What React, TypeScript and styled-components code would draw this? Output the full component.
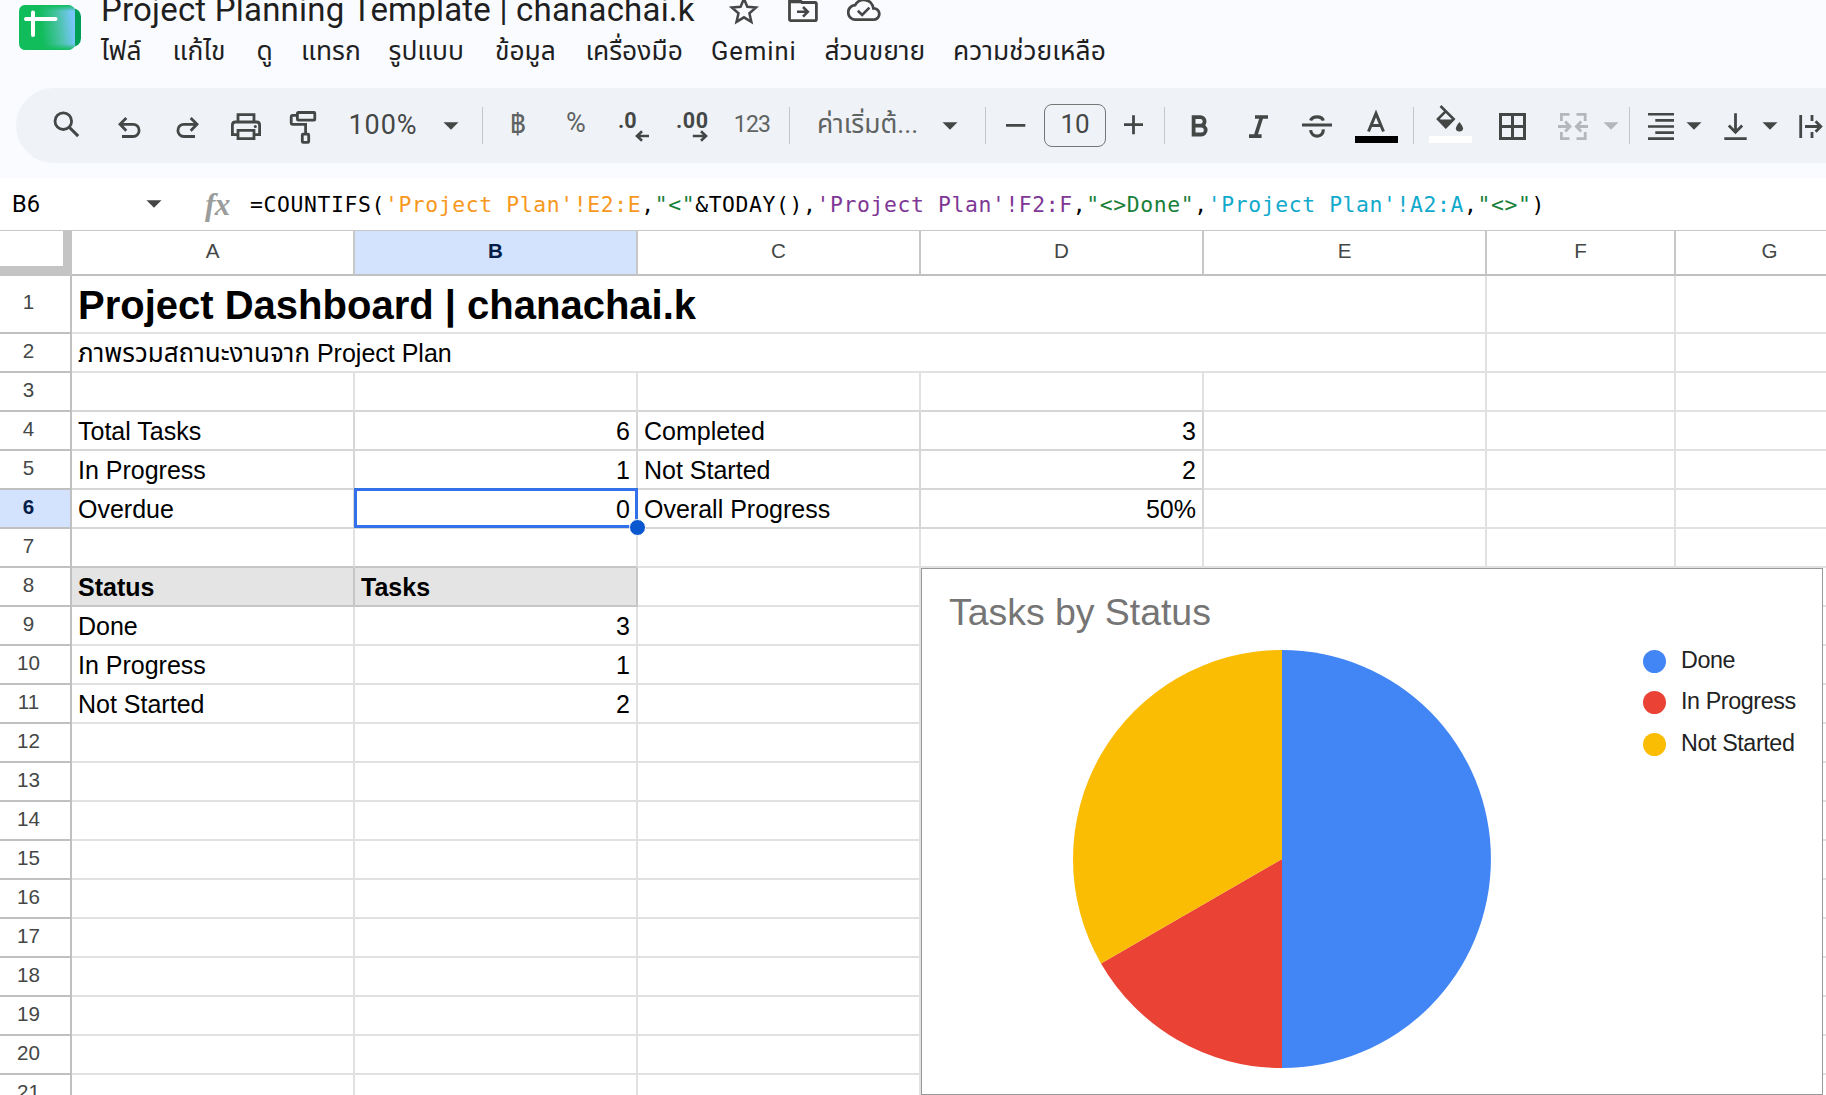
import React from "react";
import styled, { createGlobalStyle } from "styled-components";

const ICON = "#444746";
const GRID = "#e1e1e1";
const GRID_MID = "#d6d6d6";
const GRID_DARK = "#c6c6c6";

const sans = `"Liberation Sans", Arial, "Noto Sans Thai", sans-serif`;
const ui = `Roboto, "Noto Sans Thai", "Liberation Sans", sans-serif`;
const mono = `"DejaVu Sans Mono", "Liberation Mono", monospace`;

const GlobalStyle = createGlobalStyle`
  *, *::before, *::after { box-sizing: border-box; }
  html, body { margin: 0; padding: 0; overflow: hidden; background: #fff; }
  body { font-family: ${sans}; color: #000; }
`;

const Page = styled.div`
  display: flex;
  flex-direction: column;
  width: 1826px;
  height: 1095px;
  overflow: hidden;
  background: #fff;
`;

/* ---------- header ---------- */

const Top = styled.div`
  height: 178px;
  flex-shrink: 0;
  background: #f9fbff;
  overflow: hidden;
`;

const Header = styled.header`
  display: flex;
  height: 88px;
  padding-left: 19px;
`;

const Logo = styled.svg`
  width: 62px;
  height: 45px;
  margin-top: 5px;
  flex-shrink: 0;
`;

const HeaderText = styled.div`
  display: flex;
  flex-direction: column;
  margin-left: 20px;
`;

const TitleRow = styled.div`
  display: flex;
  align-items: center;
  height: 40px;
  margin-top: -10px;
`;

const Title = styled.h1`
  width: 594px;
  margin: 0;
  font: 400 33px/40px ${ui};
  letter-spacing: 0.2px;
  white-space: nowrap;
  color: #1f1f1f;
`;

const TitleIcon = styled.svg<{ $w: number; $gap: number }>`
  width: ${(p) => p.$w}px;
  height: 30px;
  margin-left: ${(p) => p.$gap}px;
  flex-shrink: 0;
`;

const Menu = styled.nav`
  display: flex;
  align-items: center;
  height: 43px;
  gap: 28.5px;
`;

const MenuItem = styled.span<{ $w: number; $track?: number }>`
  width: ${(p) => p.$w}px;
  flex-shrink: 0;
  font: 400 ${(p) => (p.$track ? 25.5 : 26.4)}px/43px ${ui};
  letter-spacing: ${(p) => p.$track ?? 0}px;
  white-space: nowrap;
  color: #1f1f1f;
`;

/* ---------- toolbar ---------- */

const Toolbar = styled.div`
  display: flex;
  align-items: center;
  height: 75px;
  margin-left: 16px;
  padding-left: 30px;
  border-radius: 37.5px 0 0 37.5px;
  background: #eff3f8;
  overflow: hidden;
`;

const Slot = styled.div<{ $w?: number; $gap?: number }>`
  display: flex;
  align-items: center;
  justify-content: center;
  width: ${(p) => p.$w ?? 40}px;
  height: 43px;
  margin-left: ${(p) => p.$gap ?? 0}px;
  flex-shrink: 0;
`;

const Divider = styled.div<{ $gap: number }>`
  width: 1px;
  height: 37px;
  margin-left: ${(p) => p.$gap}px;
  flex-shrink: 0;
  background: #c7c7c7;
`;

const Glyph = styled.svg<{ $muted?: boolean }>`
  display: block;
  width: 100%;
  height: 43px;
  overflow: visible;
  fill: none;
  stroke: ${(p) => (p.$muted ? "#b4b8ba" : ICON)};
  stroke-width: 2.8;
`;

const GlyphText = styled.text`
  font: 700 21.5px ${ui};
  fill: ${ICON};
  stroke: none;
`;

const Label = styled.span<{ $size: number; $weight?: number; $color?: string; $track?: number; $dy?: number }>`
  font: ${(p) => p.$weight ?? 400} ${(p) => p.$size}px/43px ${ui};
  letter-spacing: ${(p) => p.$track ?? 0}px;
  padding-bottom: ${(p) => p.$dy ?? 0}px;
  color: ${(p) => p.$color ?? ICON};
  white-space: nowrap;
`;

const SizeBox = styled.div`
  display: flex;
  align-items: center;
  justify-content: center;
  width: 62px;
  height: 43px;
  margin: 0 0 1px 8px;
  flex-shrink: 0;
  border: 1px solid #747775;
  border-radius: 8px;
`;

const CaretSvg = styled.svg<{ $gap: number }>`
  width: 16px;
  height: 8px;
  margin-left: ${(p) => p.$gap}px;
  flex-shrink: 0;
`;

const Caret = ({ gap, color = ICON }: { gap: number; color?: string }) => (
  <CaretSvg $gap={gap} viewBox="0 0 16 8">
    <path d="M0.5 0.3h15L8 7.8z" fill={color} />
  </CaretSvg>
);

/* ---------- formula bar ---------- */

const FormulaBar = styled.div`
  display: flex;
  align-items: center;
  height: 53px;
  padding-left: 12px;
  flex-shrink: 0;
  border-bottom: 1px solid #c7c7c7;
`;

const NameBox = styled.span`
  width: 134px;
  font: 400 23.5px/51px ${ui};
`;

const Fx = styled.span`
  width: 45px;
  margin-left: 43px;
  font: italic 700 31px/51px "Liberation Serif", serif;
  letter-spacing: -0.5px;
  color: #9a9d9b;
`;

const Formula = styled.span`
  padding-top: 1px;
  font: 400 21.4px/52px ${mono};
  letter-spacing: 0.61px;
  white-space: pre;
`;

const Token = styled.span<{ $color: string }>`
  color: ${(p) => p.$color};
`;

/* ---------- sheet ---------- */

const Sheet = styled.main`
  position: relative;
  flex: 1;
  overflow: hidden;
`;

const Row = styled.div<{ $h: number }>`
  display: flex;
  height: ${(p) => p.$h}px;
`;

const Corner = styled.div`
  width: 72px;
  flex-shrink: 0;
  border-right: 9px solid #c4c4c4;
  border-bottom: 10px solid #c4c4c4;
`;

const ColHead = styled.div<{ $w: number; $on: boolean }>`
  width: ${(p) => p.$w}px;
  flex-shrink: 0;
  border-right: 2px solid #c7c7c7;
  border-bottom: 2px solid #c0c0c0;
  background: ${(p) => (p.$on ? "#d3e3fd" : "#fff")};
  color: ${(p) => (p.$on ? "#041e49" : "#444746")};
  font: ${(p) => (p.$on ? 700 : 400)} 20.6px/40px ${sans};
  text-align: center;
`;

const RowHead = styled.div<{ $on: boolean }>`
  display: flex;
  align-items: center;
  justify-content: center;
  width: 72px;
  padding: 0 13px 4px 0;
  flex-shrink: 0;
  border-right: 2px solid #c0c0c0;
  border-bottom: 2px solid #c0c0c0;
  background: ${(p) => (p.$on ? "#d3e3fd" : "#fff")};
  color: ${(p) => (p.$on ? "#041e49" : "#444746")};
  font: ${(p) => (p.$on ? 700 : 400)} 20.6px/24px ${sans};
`;

const CellBox = styled.div<{
  $w: number; $fill?: string; $right: string; $bottom: string; $num?: boolean; $bold?: boolean; $size?: number;
}>`
  position: relative;
  display: flex;
  align-items: flex-end;
  justify-content: ${(p) => (p.$num ? "flex-end" : "flex-start")};
  width: ${(p) => p.$w}px;
  padding: 0 6px ${(p) => (p.$size ? 4 : 3)}px 6px;
  flex-shrink: 0;
  background: ${(p) => p.$fill ?? "#fff"};
  border-right: 2px solid ${(p) => p.$right};
  border-bottom: 2px solid ${(p) => p.$bottom};
  font-weight: ${(p) => (p.$bold ? 700 : 400)};
  font-size: ${(p) => p.$size ?? 25}px;
  line-height: ${(p) => (p.$size ? 45 : 29)}px;
  white-space: pre;
`;

const ThaiRun = styled.span`
  font-size: 26px;
`;

const Selection = styled.div`
  position: absolute;
  z-index: 2;
  left: -1px;
  top: -2px;
  width: 284px;
  height: 40px;
  border: 3px solid #3271ea;
`;

const Handle = styled.div`
  position: absolute;
  z-index: 3;
  left: 274px;
  top: 29px;
  width: 17px;
  height: 17px;
  border: 1px solid #fff;
  border-radius: 50%;
  background: #0b57d0;
`;

/* ---------- chart ---------- */

const ChartCard = styled.section`
  position: absolute;
  z-index: 4;
  left: 921px;
  top: 337px;
  width: 902px;
  height: 527px;
  padding: 21px 0 0 27px;
  border: 1px solid #999;
  background: #fff;
`;

const ChartTitle = styled.h2`
  margin: 0;
  font: 400 37.5px/44px ${sans};
  letter-spacing: -0.05px;
  color: #757575;
`;

const ChartBody = styled.div`
  display: flex;
  align-items: flex-start;
  padding: 16px 0 0 124px;
`;

const Pie = styled.svg`
  width: 418px;
  height: 418px;
  flex-shrink: 0;
`;

const Legend = styled.ul`
  display: flex;
  flex-direction: column;
  margin: -9px 0 0 152px;
  padding: 0;
  list-style: none;
`;

const LegendItem = styled.li`
  display: flex;
  align-items: center;
  gap: 15px;
  height: 41.3px;
  font: 400 23.3px/39px ${sans};
  letter-spacing: -0.4px;
  white-space: nowrap;
  color: #222;
`;

const LegendText = styled.span`
  padding-bottom: 2px;
`;

const Dot = styled.i<{ $color: string }>`
  width: 23px;
  height: 23px;
  border-radius: 50%;
  background: ${(p) => p.$color};
`;

/* ---------- data ---------- */

const MENU: { text: string; w: number; track?: number }[] = [
  { text: "ไฟล์", w: 43 },
  { text: "แก้ไข", w: 55.5 },
  { text: "ดู", w: 16 },
  { text: "แทรก", w: 59 },
  { text: "รูปแบบ", w: 78 },
  { text: "ข้อมูล", w: 62 },
  { text: "เครื่องมือ", w: 97 },
  { text: "Gemini", w: 85, track: 1 },
  { text: "ส่วนขยาย", w: 100 },
  { text: "ความช่วยเหลือ", w: 153 },
];

const COLS = [
  { name: "A", w: 283 },
  { name: "B", w: 283 },
  { name: "C", w: 283 },
  { name: "D", w: 283 },
  { name: "E", w: 283 },
  { name: "F", w: 189 },
  { name: "G", w: 189 },
];

const CELLS: Record<string, string> = {
  A4: "Total Tasks", B4: "6", C4: "Completed", D4: "3",
  A5: "In Progress", B5: "1", C5: "Not Started", D5: "2",
  A6: "Overdue", B6: "0", C6: "Overall Progress", D6: "50%",
  A8: "Status", B8: "Tasks",
  A9: "Done", B9: "3",
  A10: "In Progress", B10: "1",
  A11: "Not Started", B11: "2",
};

const FORMULA: [string, string][] = [
  ["=COUNTIFS(", "#000"],
  ["'Project Plan'!E2:E", "#f7981d"],
  [",", "#000"],
  ['"<"', "#188038"],
  ["&TODAY(),", "#000"],
  ["'Project Plan'!F2:F", "#7e3794"],
  [",", "#000"],
  ['"<>Done"', "#188038"],
  [",", "#000"],
  ["'Project Plan'!A2:A", "#11a9cc"],
  [",", "#000"],
  ['"<>"', "#188038"],
  [")", "#000"],
];

const SLICES = [
  { label: "Done", color: "#4285f4", value: 3 },
  { label: "In Progress", color: "#ea4335", value: 1 },
  { label: "Not Started", color: "#fbbc04", value: 2 },
];

function slicePaths() {
  const total = SLICES.reduce((n, s) => n + s.value, 0);
  let from = 0;
  return SLICES.map((s) => {
    const to = from + s.value / total;
    const at = (t: number) =>
      `${209 + 209 * Math.sin(t * 2 * Math.PI)} ${209 - 209 * Math.cos(t * 2 * Math.PI)}`;
    const d = `M209 209L${at(from)}A209 209 0 0 1 ${at(to)}Z`;
    from = to;
    return { d, color: s.color };
  });
}

function GridCell({ col, row, w }: { col: string; row: number; w: number }) {
  const key = `${col}${row}`;
  const text = CELLS[key];
  const left = "ABCD".includes(col);
  const head = row === 8 && (col === "A" || col === "B");
  const bottom =
    (row === 7 || row === 8) && "AB".includes(col) ? GRID_DARK : left && row >= 3 && row <= 6 ? GRID_MID : GRID;
  const right = head ? GRID_DARK : left && row >= 4 && row <= 6 ? GRID_MID : GRID;
  return (
    <CellBox
      $w={w}
      $fill={head ? "#e4e4e4" : undefined}
      $right={right}
      $bottom={bottom}
      $bold={head}
      $num={!!text && /^\d/.test(text)}
    >
      {text}
      {key === "B6" && (
        <>
          <Selection />
          <Handle />
        </>
      )}
    </CellBox>
  );
}

function SheetRow({ n }: { n: number }) {
  const merged = n <= 2;
  return (
    <Row $h={n === 1 ? 58 : 39}>
      <RowHead $on={n === 6}>{n}</RowHead>
      {merged && (
        <CellBox $w={1415} $right={GRID} $bottom={GRID} $bold={n === 1} $size={n === 1 ? 40 : undefined}>
          {n === 1 ? (
            "Project Dashboard | chanachai.k"
          ) : (
            <span>
              <ThaiRun>ภาพรวมสถานะงานจาก</ThaiRun> Project Plan
            </span>
          )}
        </CellBox>
      )}
      {COLS.slice(merged ? 5 : 0).map((c) => (
        <GridCell key={c.name} col={c.name} row={n} w={c.w} />
      ))}
    </Row>
  );
}

function AppHeader() {
  return (
    <Header>
      <Logo viewBox="0 0 62 45">
        <defs>
          <linearGradient id="sheetFill" x1="0" x2="1" y1="0.1" y2="0">
            <stop offset="0.35" stopColor="#11bc5b" />
            <stop offset="0.66" stopColor="#48c3a4" />
            <stop offset="0.93" stopColor="#78c6fb" />
          </linearGradient>
          <linearGradient id="sheetEdge" x1="0" x2="0" y1="0" y2="1">
            <stop offset="0" stopColor="#11bc5b" />
            <stop offset="0.14" stopColor="#11bc5b" stopOpacity="0" />
            <stop offset="0.86" stopColor="#11bc5b" stopOpacity="0" />
            <stop offset="1" stopColor="#11bc5b" />
          </linearGradient>
        </defs>
        <rect x="30" y="3.5" width="32" height="38" rx="8" fill="#009f57" />
        <path d="M7 0H49Q53 0 56 4V41Q53 45 49 45H7Q0 45 0 38V7Q0 0 7 0Z" fill="url(#sheetFill)" />
        <path d="M7 0H49Q53 0 56 4V41Q53 45 49 45H7Q0 45 0 38V7Q0 0 7 0Z" fill="url(#sheetEdge)" />
        <path d="M7 14H36.5M14 7.5V30" stroke="#fff" strokeWidth="4" strokeLinecap="round" />
      </Logo>
      <HeaderText>
        <TitleRow>
          <Title>Project Planning Template | chanachai.k</Title>
          <TitleIcon $w={30} $gap={34} viewBox="0 0 30 30" fill="none">
            <path
              d="M15 4.2L18.1 11.6L26 12.3L20 17.5L21.8 25.3L15 21.2L8.2 25.3L10 17.5L4 12.3L11.9 11.6Z"
              transform="translate(-1.4 -0.8) scale(1.09)"
              stroke={ICON}
              strokeWidth="2.3"
            />
          </TitleIcon>
          <TitleIcon $w={30} $gap={29} viewBox="0 0 30 30" fill="none">
            <path d="M1.5 8V5.8Q1.5 4.4 2.9 4.4H11L14 7.5H27Q28.4 7.5 28.4 9V24.2Q28.4 25.6 27 25.6H2.9Q1.5 25.6 1.5 24.2Z" stroke={ICON} strokeWidth="2.8" />
            <path d="M1.5 4H11.5L15 8.2H1.5Z" fill={ICON} />
            <path d="M9 16.8H19M15 12L19.8 16.8L15 21.6" stroke={ICON} strokeWidth="2.6" />
          </TitleIcon>
          <TitleIcon $w={34} $gap={29} viewBox="0 0 34 30" fill="none">
            <path
              d="M8.7 24.6a7.2 7.2 0 0 1-.6-14.4A9.7 9.7 0 0 1 26.4 13.4a5.6 5.6 0 0 1 .6 11.2Z"
              stroke={ICON}
              strokeWidth="2.8"
            />
            <path d="M10.8 15.8L15.2 20L22.4 12.6" stroke={ICON} strokeWidth="2.6" />
          </TitleIcon>
        </TitleRow>
        <Menu>
          {MENU.map((m) => (
            <MenuItem key={m.text} $w={m.w} $track={m.track}>{m.text}</MenuItem>
          ))}
        </Menu>
      </HeaderText>
    </Header>
  );
}

function ToolBar() {
  return (
    <Toolbar>
      <Slot><Glyph viewBox="0 0 40 43"><circle cx="17.3" cy="17.2" r="8.3" /><path d="M23 23L32.2 32.2" strokeWidth="3.1" /></Glyph></Slot>
      <Slot $gap={23}><Glyph viewBox="0 0 40 43"><path d="M11 20.3H24.2a5.9 6.1 0 0 1 0 12.2H13M17.3 13.9L11 20.3L17.3 26.7" /></Glyph></Slot>
      <Slot $gap={19}><Glyph viewBox="0 0 40 43"><path d="M29 20.3H15.8a5.9 6.1 0 0 0 0 12.2H27M22.7 13.9L29 20.3L22.7 26.7" /></Glyph></Slot>
      <Slot $gap={18}>
        <Glyph viewBox="0 0 40 43">
          <path d="M12 18V10.7H28V18M12 30.7H6.4V21Q6.4 18 9.4 18H30.6Q33.6 18 33.6 21V30.7H28M12 26.4H28V34.7H12Z" />
          <circle cx="29.3" cy="22.6" r="1.5" fill={ICON} stroke="none" />
        </Glyph>
      </Slot>
      <Slot $gap={17}>
        <Glyph viewBox="0 0 40 43">
          <rect x="14.4" y="8.5" width="17.4" height="7.6" rx="0.8" />
          <path d="M14.4 11.3H9.8Q8.2 11.3 8.2 12.9V18.7Q8.2 20.3 9.8 20.3H22.6V30" />
          <rect x="19.3" y="30.2" width="6.4" height="8.2" rx="0.8" />
        </Glyph>
      </Slot>
      <Slot $w={84} $gap={18}><Label $size={27} $track={0.9}>100%</Label></Slot>
      <Caret gap={18} />
      <Divider $gap={23} />
      <Slot $gap={15}><Label $size={28} $color="#5f6361" $dy={5}>฿</Label></Slot>
      <Slot $gap={18}><Label $size={27} $color="#5f6361" $dy={4}>%</Label></Slot>
      <Slot $gap={18}>
        <Glyph viewBox="0 0 40 43">
          <GlyphText x="4" y="24">.0</GlyphText>
          <path d="M35 32H23M28 27.2L23 32L28 36.8" strokeWidth="2.6" />
        </Glyph>
      </Slot>
      <Slot $gap={18}>
        <Glyph viewBox="0 0 40 43">
          <GlyphText x="4" y="24" textLength="32">.00</GlyphText>
          <path d="M20.8 32H33M29 27.2L34 32L29 36.8" strokeWidth="2.6" />
        </Glyph>
      </Slot>
      <Slot $gap={20}><Label $size={23} $color="#5f6361" $track={-0.8} $dy={3}>123</Label></Slot>
      <Divider $gap={17} />
      <Slot $w={99} $gap={28}><Label $size={26.4} $color="#5f6361" $dy={3}>ค่าเริ่มต้...</Label></Slot>
      <Caret gap={25} />
      <Divider $gap={27} />
      <Slot $gap={10}><Glyph viewBox="0 0 40 43"><path d="M10 21.3H29.3" /></Glyph></Slot>
      <SizeBox><Label $size={26} $dy={2}>10</Label></SizeBox>
      <Slot $gap={8}><Glyph viewBox="0 0 40 43"><path d="M10 20.7H29M19.5 11.2V30.2" /></Glyph></Slot>
      <Divider $gap={10} />
      <Slot $gap={15}><Glyph viewBox="0 0 40 43"><path d="M13.6 13.1H20.3a4.1 4.1 0 0 1 0 8.6H13.6ZM13.6 21.7H21.3a4.2 4.2 0 0 1 0 8.8H13.6Z" strokeWidth="3.8" /></Glyph></Slot>
      <Slot $gap={18}><Glyph viewBox="0 0 40 43"><path d="M17 13H30M11 32.2H23.6M23.6 13L17.4 32.2" strokeWidth="3.7" /></Glyph></Slot>
      <Slot $gap={19}>
        <Glyph viewBox="0 0 40 43">
          <path d="M5 21H35" strokeWidth="2.8" />
          <path d="M13.6 16.6C15.2 11.6 25 11.6 26.3 16.6M13.6 26.2C14.4 34.2 26.6 34.2 26.3 25.4" strokeWidth="3.2" />
        </Glyph>
      </Slot>
      <Slot $w={43} $gap={18}>
        <Glyph viewBox="0 0 43 43">
          <path d="M13.5 27.5L21 9.5L28.5 27.5M16 21.4H26" strokeWidth="3" />
          <rect y="32" width="43" height="7" fill="#000" stroke="none" />
        </Glyph>
      </Slot>
      <Divider $gap={15} />
      <Slot $w={43} $gap={15}>
        <Glyph viewBox="0 0 43 43">
          <path d="M11.5 2L24.6 15.1L16.8 22.6L9 15.1L16.6 7.4" strokeWidth="2.6" />
          <path d="M8 15.6H26L16.8 25Z" fill={ICON} stroke="none" />
          <path d="M30.4 18Q34 22.4 34 24.2a3.5 3.2 0 0 1-7.1 0Q26.9 22.4 30.4 18Z" fill={ICON} stroke="none" />
          <rect y="32" width="43" height="7" fill="#fff" stroke="none" />
        </Glyph>
      </Slot>
      <Slot $gap={21}><Glyph viewBox="0 0 40 43"><path d="M7.5 10.5H31.5V34.5H7.5ZM19.5 10.5V34.5M7.5 22.5H31.5" strokeWidth="3" /></Glyph></Slot>
      <Slot $gap={20}>
        <Glyph viewBox="0 0 40 43" $muted>
          <path d="M16.5 10.4H8.4V17M23.5 10.4H32.2V17M16.5 34.6H8.4V28M23.5 34.6H32.2V28M5 22.5H16.5M12.2 17.6L17 22.5L12.2 27.4M35 22.5H24M28.2 17.6L23.4 22.5L28.2 27.4" />
        </Glyph>
      </Slot>
      <Caret gap={10} color="#b4b8ba" />
      <Divider $gap={10} />
      <Slot $gap={11}><Glyph viewBox="0 0 40 43"><path d="M7 10.3H33M14.3 16.4H33M7 22.5H33M14.3 28.6H33M7 34.6H33" strokeWidth="2.6" /></Glyph></Slot>
      <Caret gap={5} />
      <Slot $gap={13}><Glyph viewBox="0 0 40 43"><path d="M9.3 34.6H31.7M20.5 9.3V28M13.8 21.6L20.5 28.2L27.2 21.6" /></Glyph></Slot>
      <Caret gap={7} />
      <Slot $gap={13}><Glyph viewBox="0 0 40 43"><path d="M9.7 11V34M21 11V17M21 28V34M14 22.5H29M24.6 17.2L29.8 22.5L24.6 27.8" /></Glyph></Slot>
    </Toolbar>
  );
}

export default function App() {
  const rows = Array.from({ length: 21 }, (_, i) => i + 1);
  return (
    <Page>
      <GlobalStyle />
      <Top>
        <AppHeader />
        <ToolBar />
      </Top>
      <FormulaBar>
        <NameBox>B6</NameBox>
        <Caret gap={0} color="#444" />
        <Fx>fx</Fx>
        <Formula>
          {FORMULA.map(([t, c], i) => (
            <Token key={i} $color={c}>{t}</Token>
          ))}
        </Formula>
      </FormulaBar>
      <Sheet>
        <Row $h={45}>
          <Corner />
          {COLS.map((c) => (
            <ColHead key={c.name} $w={c.w} $on={c.name === "B"}>{c.name}</ColHead>
          ))}
        </Row>
        {rows.map((n) => (
          <SheetRow key={n} n={n} />
        ))}
        <ChartCard>
          <ChartTitle>Tasks by Status</ChartTitle>
          <ChartBody>
            <Pie viewBox="0 0 418 418">
              {slicePaths().map((s) => (
                <path key={s.color} d={s.d} fill={s.color} />
              ))}
            </Pie>
            <Legend>
              {SLICES.map((s) => (
                <LegendItem key={s.label}>
                  <Dot $color={s.color} />
                  <LegendText>{s.label}</LegendText>
                </LegendItem>
              ))}
            </Legend>
          </ChartBody>
        </ChartCard>
      </Sheet>
    </Page>
  );
}
